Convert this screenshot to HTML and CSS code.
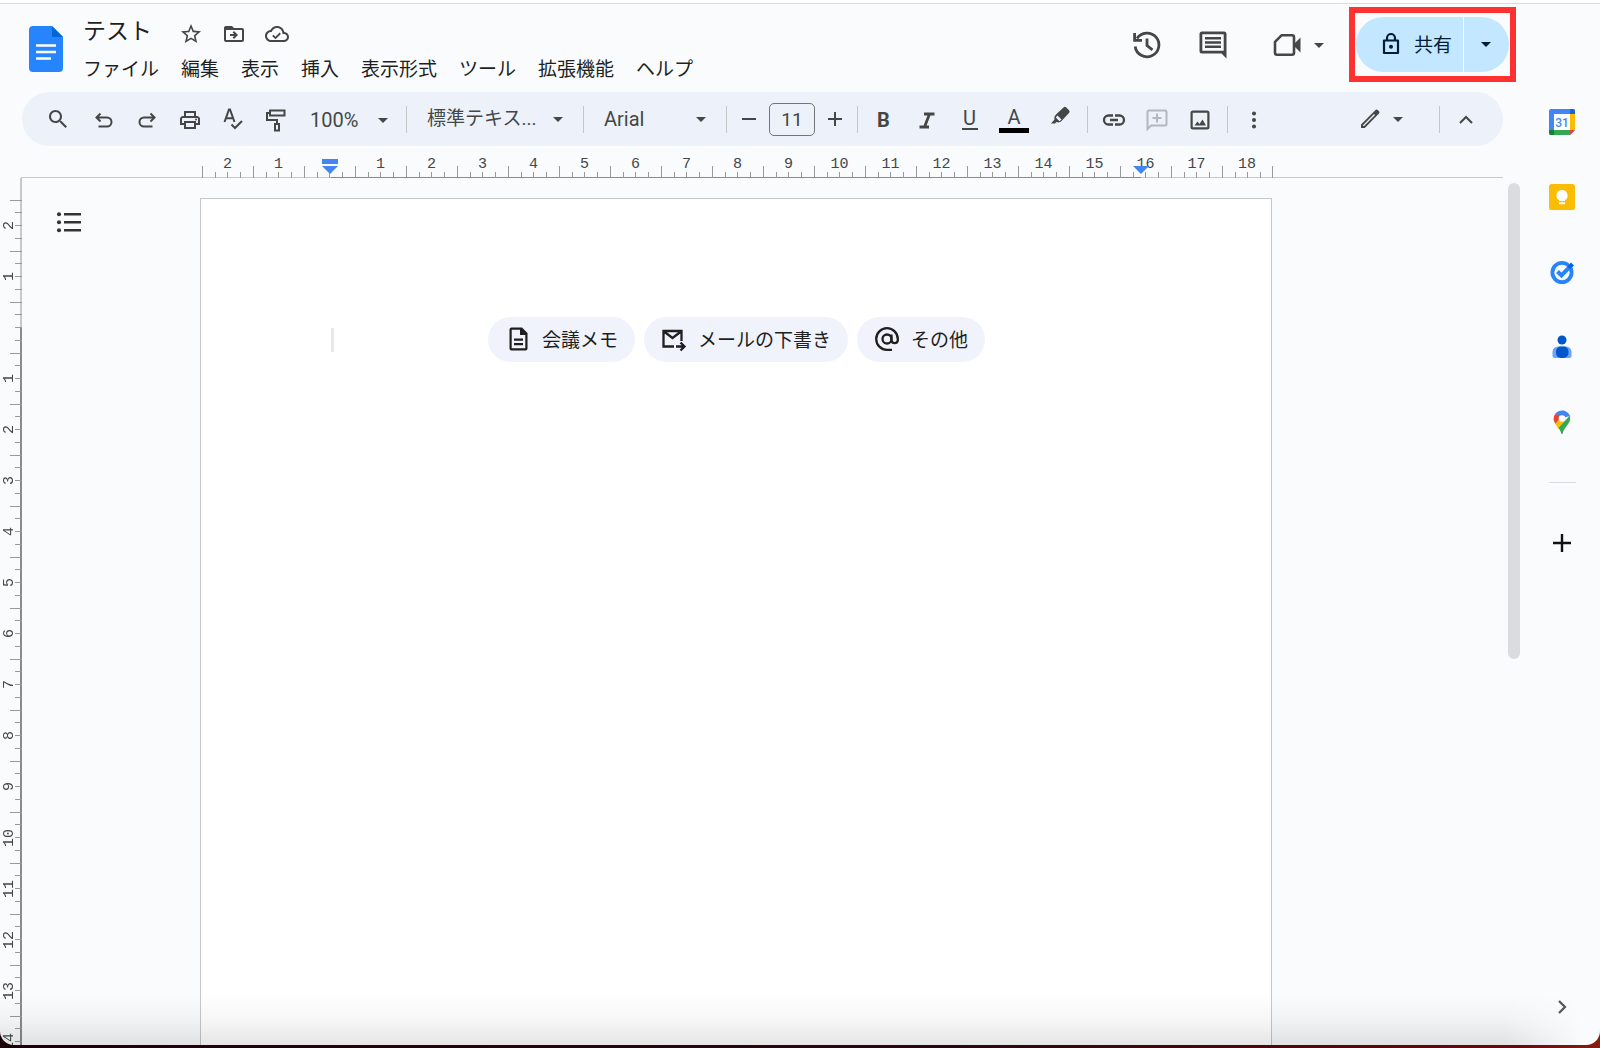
FILE: index.html
```html
<!DOCTYPE html>
<html lang="ja">
<head>
<meta charset="utf-8">
<title>テスト</title>
<link rel="stylesheet" href="styles.css">
</head>
<body>
<div class="window">
  <div class="main">
    <header class="header">
      <a class="logo" href="#" aria-label="ホーム"><svg width="34" height="46" viewBox="0 0 34 46"><path d="M4 0h19l11 11v31a4 4 0 0 1-4 4H4a4 4 0 0 1-4-4V4a4 4 0 0 1 4-4z" fill="#2684fc"/><path d="M23 0l11 11H23z" fill="#0066da"/><path d="M7 19.500h20M7 26h20M7 32.500h15" stroke="#fff" stroke-width="2.600"/></svg></a>
      <div class="titles">
        <div class="title-row">
          <h1>テスト</h1>
          <button class="icon" aria-label="スター"><svg viewBox="0 0 24 24"><path d="M22 9.240l-7.190-.620L12 2 9.190 8.630 2 9.240l5.460 4.730L5.820 21 12 17.270 18.180 21l-1.630-7.030L22 9.240zM12 15.400l-3.760 2.270 1-4.280-3.320-2.880 4.380-.380L12 6.100l1.710 4.040 4.380.380-3.320 2.880 1 4.280L12 15.400z"/></svg></button>
          <button class="icon" aria-label="移動"><svg viewBox="0 0 24 24"><path fill-rule="evenodd" d="M20 6h-8l-2-2H4c-1.100 0-2 .9-2 2v12c0 1.100.9 2 2 2h16c1.100 0 2-.9 2-2V8c0-1.100-.9-2-2-2zm0 12H4V8h16v10z"/><path d="M12.170 12H8v2h4.170l-1.580 1.590L12 17l4-4-4-4-1.410 1.410z"/></svg></button>
          <button class="icon" aria-label="保存済み"><svg viewBox="0 0 24 24"><path d="M19.350 10.040C18.670 6.590 15.640 4 12 4 9.110 4 6.600 5.640 5.350 8.040 2.340 8.360 0 10.910 0 14c0 3.310 2.690 6 6 6h13c2.760 0 5-2.240 5-5 0-2.640-2.050-4.780-4.650-4.960zM19 18H6c-2.210 0-4-1.790-4-4s1.790-4 4-4h.71C7.370 7.690 9.480 6 12 6c3.040 0 5.500 2.460 5.500 5.500v.5H19c1.660 0 3 1.340 3 3s-1.340 3-3 3zm-8.500-3.320l-2-2L7.200 14l3.300 3.300 5.400-5.400-1.300-1.300z"/></svg></button>
        </div>
        <nav class="menu">
          <button>ファイル</button><button>編集</button><button>表示</button><button>挿入</button><button>表示形式</button><button>ツール</button><button>拡張機能</button><button>ヘルプ</button>
        </nav>
      </div>
      <div class="actions">
        <button class="action" aria-label="変更履歴"><svg class="line heavy" width="30" height="30" viewBox="0 0 30 30"><path d="M3.200 16.500A11.900 11.900 0 1 0 5 8.500M2.600 3v7.400H10M15 8.500v7l5.500 4.300"/></svg></button>
        <button class="action" aria-label="コメント"><svg width="30" height="30" viewBox="0 0 30 30"><path fill-rule="evenodd" d="M4 1.500h22a2.500 2.500 0 0 1 2.500 2.500v24.500l-5-5H4A2.500 2.500 0 0 1 1.500 21V4A2.500 2.500 0 0 1 4 1.500zM4.300 4.300v16.400h21.400V4.300z"/><path d="M7 7h16v2.400H7zM7 11.300h16v2.400H7zM7 15.600h16V18H7z"/></svg></button>
        <button class="meet" aria-label="ビデオ通話"><svg width="30" height="30" viewBox="0 0 30 30"><path d="M9.500 5.300H20a2 2 0 0 1 2 2v15.400a2 2 0 0 1-2 2H5a2 2 0 0 1-2-2V11.800z" fill="none" stroke="currentColor" stroke-width="2.600" stroke-linejoin="round"/><path d="M22 14l6.500-6.500v15L22 16z"/></svg><svg class="caret" viewBox="0 0 10 5"><path d="M0 0h10L5 5z"/></svg></button>
        <div class="highlight">
          <div class="share">
            <button class="share-main"><svg width="24" height="24" viewBox="0 0 24 24"><path d="M5 8.500h14V21H5zM8 8.500V6a4 4 0 0 1 8 0v2.500" fill="none" stroke="currentColor" stroke-width="2.200" stroke-linejoin="round"/><circle cx="12" cy="14.800" r="2"/></svg>共有</button>
            <button class="share-more" aria-label="共有オプション"><svg class="caret" viewBox="0 0 10 5"><path d="M0 0h10L5 5z"/></svg></button>
          </div>
        </div>
      </div>
    </header>

    <div class="toolbar" role="toolbar">
      <button class="tool first" aria-label="検索"><svg viewBox="0 0 24 24"><path d="M15.500 14h-.790l-.280-.270C15.410 12.590 16 11.110 16 9.500 16 5.910 13.090 3 9.500 3S3 5.910 3 9.500 5.910 16 9.500 16c1.610 0 3.090-.590 4.230-1.570l.270.280v.790l5.500 5.500L21 19.500l-5.500-5.500zm-6 0C7.010 14 5 11.990 5 9.500S7.010 5 9.500 5 14 7.010 14 9.500 11.990 14 9.500 14z"/></svg></button>
      <button class="tool low" aria-label="元に戻す"><svg class="line" viewBox="0 0 24 24"><path d="M8.500 5.500l-4 4 4 4M4.500 9.500h10.500a4.500 4.500 0 0 1 0 9H6.500"/></svg></button>
      <button class="tool low" aria-label="やり直し"><svg class="line" viewBox="0 0 24 24"><path d="M15.500 5.500l4 4-4 4M19.500 9.500H9a4.500 4.500 0 0 0 0 9h8.500"/></svg></button>
      <button class="tool low" aria-label="印刷"><svg viewBox="0 0 24 24"><path fill-rule="evenodd" d="M19 8h-1V3H6v5H5c-1.660 0-3 1.340-3 3v6h4v4h12v-4h4v-6c0-1.660-1.340-3-3-3zM8 5h8v3H8zM16 19H8v-4h8zM18 15v-2H6v2H4v-4c0-.55.45-1 1-1h14c.55 0 1 .45 1 1v4z"/><circle cx="18" cy="11.500" r="1"/></svg></button>
      <button class="tool" aria-label="スペルチェック"><svg class="line" viewBox="0 0 24 24"><path d="M3.500 15L8 2.500h1L13.500 15M5.300 11.200h6.400M10.500 17.500l3.500 3.500 7-7"/></svg></button>
      <button class="tool low" aria-label="書式を貼り付け"><svg class="line" viewBox="0 0 24 24"><path d="M6 2.500h14.500v5H6zM6 5H3v7h10v4M11 16h4v6.500h-4z"/></svg></button>
      <label class="drop zoom"><select aria-label="ズーム"><option>100%</option></select><svg class="caret" viewBox="0 0 10 5"><path d="M0 0h10L5 5z"/></svg></label>
      <i class="sep"></i>
      <label class="drop style"><select aria-label="スタイル"><option>標準テキス...</option></select><svg class="caret" viewBox="0 0 10 5"><path d="M0 0h10L5 5z"/></svg></label>
      <i class="sep"></i>
      <label class="drop font"><select aria-label="フォント"><option>Arial</option></select><svg class="caret" viewBox="0 0 10 5"><path d="M0 0h10L5 5z"/></svg></label>
      <i class="sep"></i>
      <button class="tool step" aria-label="縮小"><svg class="line" viewBox="0 0 24 24"><path d="M5 12h14"/></svg></button>
      <input class="size" type="text" value="11" aria-label="フォントサイズ">
      <button class="tool step" aria-label="拡大"><svg class="line" viewBox="0 0 24 24"><path d="M5 12h14M12 5v14"/></svg></button>
      <i class="sep near"></i>
      <button class="tool letter low" aria-label="太字"><b>B</b></button>
      <button class="tool low" aria-label="斜体"><svg class="line heavy" viewBox="0 0 24 24"><path d="M9 6h10.500M4.500 19H14M14.500 6l-5 13"/></svg></button>
      <button class="tool letter under" aria-label="下線"><span>U</span></button>
      <button class="tool wide letter color" aria-label="文字の色"><span>A</span></button>
      <button class="tool wide raise" aria-label="ハイライト"><svg viewBox="0 0 24 24"><path fill-rule="evenodd" d="M15.500 2.500a2 2 0 0 1 2.800 0l2.700 2.700a2 2 0 0 1 0 2.800l-7.500 8c-2 1.800-3.500 1.500-5 1l-1.500 1.500H3l3.500-4c-.5-2 0-3.500 1.500-5zM9.500 10.500l4 4-2 1.700-3.700-3.700z"/></svg></button>
      <i class="sep near"></i>
      <button class="tool low" aria-label="リンク"><svg class="line medium" viewBox="0 0 24 24"><path d="M11 7.500H6.500a4.500 4.500 0 0 0 0 9H11M13 7.500h4.500a4.500 4.500 0 0 1 0 9H13M8 12h8"/></svg></button>
      <button class="tool low" aria-label="コメントを追加" disabled><svg class="line" viewBox="0 0 24 24"><path d="M2.500 21V4a1.500 1.500 0 0 1 1.500-1.500h16A1.500 1.500 0 0 1 21.500 4v12a1.500 1.500 0 0 1-1.500 1.500H6zM12 5.500v9M7.500 10h9"/></svg></button>
      <button class="tool low" aria-label="画像"><svg viewBox="0 0 24 24"><path fill-rule="evenodd" d="M5 2.500h14A2.500 2.500 0 0 1 21.500 5v14a2.500 2.500 0 0 1-2.500 2.500H5A2.500 2.500 0 0 1 2.500 19V5A2.500 2.500 0 0 1 5 2.500zM4.700 4.700v14.600h14.600V4.700z"/><path d="M6.500 17.500l3-4 2 2.500 3-4.500 3.500 6z"/></svg></button>
      <i class="sep gap"></i>
      <button class="tool low" aria-label="その他"><svg viewBox="0 0 24 24"><circle cx="12" cy="5.500" r="2"/><circle cx="12" cy="12" r="2"/><circle cx="12" cy="18.500" r="2"/></svg></button>
      <button class="mode" aria-label="編集モード"><svg viewBox="0 0 24 24"><path fill-rule="evenodd" d="M3 17.500L16.500 4l1-1a1.600 1.600 0 0 1 2.200 0l1.300 1.300a1.600 1.600 0 0 1 0 2.200L6.800 21H3zM5 18.200V19h1L17 8.100 16 7z"/></svg><svg class="caret" viewBox="0 0 10 5"><path d="M0 0h10L5 5z"/></svg></button>
      <i class="sep"></i>
      <button class="tool low" aria-label="メニューを隠す"><svg class="line" viewBox="0 0 24 24"><path d="M6 15l6-6 6 6"/></svg></button>
    </div>

    <div class="hruler">
      <div class="hcells"><span>2</span><span>1</span><span></span><span>1</span><span>2</span><span>3</span><span>4</span><span>5</span><span>6</span><span>7</span><span>8</span><span>9</span><span>10</span><span>11</span><span>12</span><span>13</span><span>14</span><span>15</span><span>16</span><span>17</span><span>18</span>
        <svg class="indent left" width="16" height="15" viewBox="0 0 16 15"><path d="M0 0h16v5H0zM0 7h16l-8 8z"/></svg>
        <svg class="indent right" width="16" height="8" viewBox="0 0 16 8"><path d="M0 0h16L8 8z"/></svg>
      </div>
    </div>

    <div class="workspace">
      <div class="vruler"><span>2</span><span>1</span><span></span><span>1</span><span>2</span><span>3</span><span>4</span><span>5</span><span>6</span><span>7</span><span>8</span><span>9</span><span>10</span><span>11</span><span>12</span><span>13</span><span>14</span></div>
      <div class="canvas">
        <button class="outline" aria-label="概要を表示"><svg width="26" height="24" viewBox="0 0 26 24"><path d="M8 3h17v2.500H8zM8 11h17v2.500H8zM8 19h17v2.500H8z"/><circle cx="3" cy="4.200" r="2"/><circle cx="3" cy="12.200" r="2"/><circle cx="3" cy="20.200" r="2"/></svg></button>
        <main class="page">
          <div class="first-line">
            <i class="cursor"></i>
            <button class="chip"><svg viewBox="0 0 26 26"><path fill-rule="evenodd" d="M6.500 1.500H17L22.500 7v15.500a2 2 0 0 1-2 2h-14a2 2 0 0 1-2-2v-19a2 2 0 0 1 2-2zM6.700 3.700v18.600h13.600V9H15V3.700z"/><path d="M9 12.500h9v2.200H9zM9 17h9v2.200H9z"/></svg>会議メモ</button>
            <button class="chip"><svg class="line medium" viewBox="0 0 26 26"><path d="M13 20.500H2.500V5h18v10M3 5.500l8.500 6.500L20 5.500M15 20.500h8M19.500 16.500l4 4-4 4"/></svg>メールの下書き</button>
            <button class="chip"><svg class="line medium" viewBox="0 0 26 26"><circle cx="13" cy="13" r="4.500"/><path d="M17.500 8.500v6a3.200 3.200 0 0 0 6.300 0V13a10.800 10.800 0 1 0-10.800 10.800h5"/></svg>その他</button>
          </div>
        </main>
      </div>
      <div class="scrollbar"></div>
    </div>
  </div>

  <aside class="side">
    <a href="#" aria-label="カレンダー"><svg viewBox="0 0 26 26"><path d="M2 0h22a2 2 0 0 1 2 2v19l-5 5H2a2 2 0 0 1-2-2V2a2 2 0 0 1 2-2z" fill="#4285f4"/><path d="M21 0h3a2 2 0 0 1 2 2v3h-5z" fill="#1967d2"/><path d="M21 5h5v16h-5z" fill="#fbbc04"/><path d="M5 21h16v5H5z" fill="#34a853"/><path d="M0 21h5v5H2a2 2 0 0 1-2-2z" fill="#188038"/><path d="M21 21h5l-5 5z" fill="#ea4335"/><path d="M5 5h16v16H5z" fill="#fff"/><text x="13" y="18" text-anchor="middle" class="day">31</text></svg></a>
    <a href="#" aria-label="Keep"><svg viewBox="0 0 26 26"><rect width="26" height="26" rx="2.500" fill="#fbbc04"/><path d="M13 6a5.600 5.600 0 0 1 3 10.300V17h-6v-.7A5.600 5.600 0 0 1 13 6zM10 18.300h6v2h-6z" fill="#fff"/></svg></a>
    <a href="#" aria-label="ToDo リスト"><svg viewBox="0 0 26 26"><circle cx="13" cy="13.500" r="9.600" fill="none" stroke="#2684fc" stroke-width="3.800"/><path d="M8.500 12.500l4 4L23.500 5" fill="none" stroke="#2684fc" stroke-width="4"/><path d="M18.500 7.500l3.500-3.500 2.500 2.500L21 10z" fill="#0066da"/></svg></a>
    <a href="#" aria-label="連絡先"><svg viewBox="0 0 26 26"><circle cx="13" cy="6" r="4.500" fill="#0057cc"/><path d="M9 12.500h8a5.500 5.500 0 0 1 5.500 5.500v4a2 2 0 0 1-2 2H5.500a2 2 0 0 1-2-2v-4A5.500 5.500 0 0 1 9 12.500z" fill="#6ea0ff"/><rect x="7" y="12.500" width="12.500" height="11.500" rx="5" fill="#0057cc"/></svg></a>
    <a href="#" aria-label="マップ"><svg viewBox="0 0 26 26"><path d="M6.500 4.500A8.500 8.500 0 0 1 21 7L10 10z" fill="#4285f4"/><path d="M6.500 4.500L12 9l-5.500 6A9 9 0 0 1 6.500 4.500z" fill="#ea4335"/><path d="M6.300 14.700L13 7l3 6-6.500 7z" fill="#fbbc04"/><path d="M20.800 6.500c1.200 4-.3 7-3 10.300-2 2.600-3.500 4.700-4.300 8.200h-1c-.6-2.300-1.500-3.900-3-6z" fill="#34a853"/><circle cx="13" cy="9.500" r="3.300" fill="#fff"/></svg></a>
    <hr>
    <button aria-label="アドオンを取得"><svg viewBox="0 0 26 26"><path d="M13 4v18M4 13h18" stroke="#111" stroke-width="2.400"/></svg></button>
    <button class="collapse" aria-label="サイドパネルを非表示"><svg viewBox="0 0 26 26"><path d="M10 7l6 6-6 6" fill="none" stroke="#555" stroke-width="2.200"/></svg></button>
  </aside>
  <div class="shade"></div>
</div>
</body>
</html>
```
FILE: styles.css
```css
* {
  box-sizing: border-box;
}

body {
  margin: 0;
  height: 100vh;
  padding-bottom: 3px;
  overflow: hidden;
  background: linear-gradient(90deg, #1c0008 0%, #2a0510 60%, #6a0808 95%, #8a1c0c 100%);
  font-family: Roboto, "Noto Sans CJK JP", sans-serif;
  color: #1f1f1f;
}

button,
select,
input {
  margin: 0;
  padding: 0;
  border: 0;
  background: none;
  font: inherit;
  color: inherit;
}

svg {
  display: block;
  flex: none;
  fill: currentColor;
}

.line {
  fill: none;
  stroke: currentColor;
  stroke-width: 2;
}

.line.medium {
  stroke-width: 2.3;
}

.line.heavy {
  stroke-width: 2.8;
}

.window {
  position: relative;
  display: flex;
  height: 100%;
  border-top: 3px solid #fff;
  border-radius: 0 0 14px 14px;
  background: #f9fbfd;
  overflow: hidden;
}

.main {
  flex: 1;
  min-width: 0;
  display: flex;
  flex-direction: column;
  border-top: 1px solid #dcdcdc;
}

.header {
  display: flex;
  flex: none;
  height: 88px;
  padding: 0 8px 0 29px;
}

.logo {
  margin-top: 22px;
}

.titles {
  margin-left: 20px;
}

.title-row {
  display: flex;
  align-items: center;
  height: 50px;
  padding-top: 9px;
  color: #444746;
}

h1 {
  margin: -4px 17px 0 0;
  width: 79px;
  font-size: 23px;
  font-weight: 400;
  line-height: 32px;
  color: #1f1f1f;
  white-space: nowrap;
}

.icon {
  width: 43px;
}

.icon svg {
  width: 24px;
  height: 24px;
}

.menu {
  display: flex;
  gap: 22px;
  font-size: 19px;
  line-height: 32px;
  white-space: nowrap;
}

.actions {
  display: flex;
  align-items: flex-start;
  margin-left: auto;
  color: #444746;
}

.action {
  margin: 26px 36px 0 0;
}

.meet {
  display: flex;
  align-items: center;
  gap: 12px;
  margin: 26px 25px 0 8px;
}

.caret {
  width: 10px;
  height: 5px;
}

.highlight {
  margin-top: 3px;
  padding: 4px 1px;
  border: 6px solid #ff3131;
  background: #f9fbfd;
}

.share {
  display: flex;
  height: 55px;
  border-radius: 28px;
  overflow: hidden;
  background: #c2e7ff;
  color: #001d35;
}

.share-main {
  display: flex;
  align-items: center;
  gap: 11px;
  width: 107px;
  padding: 0 0 2px 23px;
  font-size: 19px;
}

.share-more {
  width: 46px;
  padding-left: 17px;
  border-left: 1px solid #fff;
}

.toolbar {
  display: flex;
  flex: none;
  align-items: center;
  height: 54px;
  margin: 0 21px 0 22px;
  padding: 0 16px 0 14px;
  border-radius: 27px;
  background: #edf1fa;
  color: #444746;
}

.tool {
  display: flex;
  flex: none;
  align-items: center;
  justify-content: center;
  width: 43px;
  height: 40px;
}

.tool svg,
.mode svg:first-child {
  width: 24px;
  height: 24px;
}

.tool.first {
  margin-right: 3px;
}

.tool.step {
  width: 36px;
}

.tool.wide {
  width: 46px;
}

.tool.low {
  padding-top: 2px;
}

.tool.raise {
  padding-bottom: 4px;
}

.tool:disabled {
  color: #b4b7bb;
}

.letter {
  font-size: 20px;
  line-height: 24px;
}

.under span {
  width: 16px;
  border-bottom: 2px solid #444746;
  line-height: 20px;
}

.color span {
  width: 30px;
  border-bottom: 5px solid #000;
  line-height: 22px;
}

.sep {
  flex: none;
  width: 1px;
  height: 27px;
  background: #c7c7c7;
}

.sep + .tool {
  margin-left: 4px;
}

.sep.near {
  margin-left: 4px;
}

.sep.gap {
  margin-left: 6px;
}

.drop {
  display: flex;
  flex: none;
  align-items: center;
  justify-content: space-between;
  padding: 0 20px;
  font-size: 20px;
}

.drop select {
  appearance: none;
  line-height: 30px;
}

.drop.zoom {
  width: 109px;
  padding: 2px 18px 0 13px;
}

.drop.style {
  width: 176px;
  font-size: 19px;
}

.drop.font {
  width: 142px;
}

.size {
  width: 46px;
  height: 33px;
  margin: 0 2px;
  border: 1px solid #747775;
  border-radius: 5px;
  text-align: center;
  font-size: 19px;
}

.mode {
  display: flex;
  align-items: center;
  gap: 11px;
  margin: 0 36px 0 auto;
}

.hruler {
  flex: none;
  height: 32px;
  margin-right: 21px;
  padding-left: 202px;
  background: linear-gradient(#c8c8c8, #c8c8c8) 21px 100% / 100% 1px no-repeat;
}

.hcells {
  position: relative;
  display: flex;
  width: 1071px;
  height: 32px;
  background: linear-gradient(#8a8a8a, #8a8a8a) 129px 100% / 810px 1px no-repeat;
}

.hcells span,
.vruler span {
  flex: none;
  font-family: "Liberation Mono", monospace;
  font-size: 15px;
  line-height: 20px;
  text-align: center;
  color: #444746;
}

.hcells span {
  width: 51px;
  height: 32px;
  padding-top: 9px;
  background:
    linear-gradient(#999, #999) 0 100% / 1px 12px no-repeat,
    linear-gradient(#999, #999) 13px 100% / 1px 6px no-repeat,
    linear-gradient(#999, #999) 25px 100% / 1px 6px no-repeat,
    linear-gradient(#999, #999) 38px 100% / 1px 6px no-repeat;
}

.hcells span:last-of-type {
  border-right: 1px solid;
  border-image: linear-gradient(transparent 20px, #999 20px) 1;
}

.indent {
  position: absolute;
  fill: #4285f4;
}

.indent.left {
  left: 120px;
  top: 13px;
}

.indent.right {
  left: 931px;
  top: 20px;
}

.workspace {
  flex: 1;
  min-height: 0;
  display: flex;
}

.vruler {
  flex: none;
  width: 22px;
  padding-top: 22px;
  overflow: hidden;
  background:
    linear-gradient(#c8c8c8, #c8c8c8) 20px 0 / 2px 150px no-repeat,
    linear-gradient(#8a8a8a, #8a8a8a) 20px 150px / 2px 100% no-repeat;
}

.vruler span {
  display: block;
  width: 22px;
  height: 51px;
  padding-left: 6px;
  writing-mode: vertical-rl;
  transform: rotate(180deg);
  background:
    linear-gradient(#999, #999) 0 100% / 12px 1px no-repeat,
    linear-gradient(#999, #999) 0 38px / 7px 1px no-repeat,
    linear-gradient(#999, #999) 0 25px / 7px 1px no-repeat,
    linear-gradient(#999, #999) 0 12px / 7px 1px no-repeat;
}

.canvas {
  flex: 1;
  min-width: 0;
  display: flex;
  align-items: stretch;
  overflow: hidden;
}

.outline {
  align-self: flex-start;
  flex: none;
  width: 178px;
  padding: 32px 0 0 34px;
  color: #333;
}

.page {
  flex: none;
  width: 1072px;
  margin-top: 20px;
  padding: 118px 0 0 130px;
  border: 1px solid #c7c7c7;
  border-bottom: 0;
  background: #fff;
}

.first-line {
  display: flex;
  align-items: center;
  gap: 9px;
}

.cursor {
  width: 3px;
  height: 24px;
  margin-right: 145px;
  background: #e8e8e8;
}

.chip {
  display: flex;
  align-items: center;
  gap: 11px;
  height: 45px;
  padding: 0 17px 2px 17px;
  border-radius: 23px;
  background: #f0f3fb;
  font-size: 19px;
  white-space: nowrap;
}

.chip svg {
  width: 26px;
  height: 26px;
}

.scrollbar {
  flex: none;
  width: 12px;
  height: 476px;
  margin: 5px 4px 0 5px;
  border-radius: 6px;
  background: #dadce0;
}

.side {
  flex: none;
  display: flex;
  flex-direction: column;
  align-items: center;
  gap: 49px;
  width: 76px;
  padding: 105px 0 25px;
  border-top: 1px solid #dcdcdc;
}

.side svg {
  width: 26px;
  height: 26px;
}

.side hr {
  width: 27px;
  height: 1px;
  margin: -2px 0;
  border: 0;
  background: #dadce0;
}

.collapse {
  margin-top: auto;
}

.day {
  font: 500 12px Roboto, sans-serif;
  fill: #4285f4;
}

.shade {
  position: absolute;
  left: 0;
  right: 0;
  bottom: 0;
  height: 52px;
  background: linear-gradient(transparent, rgba(0, 0, 0, 0.03) 50%, rgba(0, 0, 0, 0.1));
  mask-image: linear-gradient(90deg, #000 94%, transparent 99%);
  pointer-events: none;
}
```
